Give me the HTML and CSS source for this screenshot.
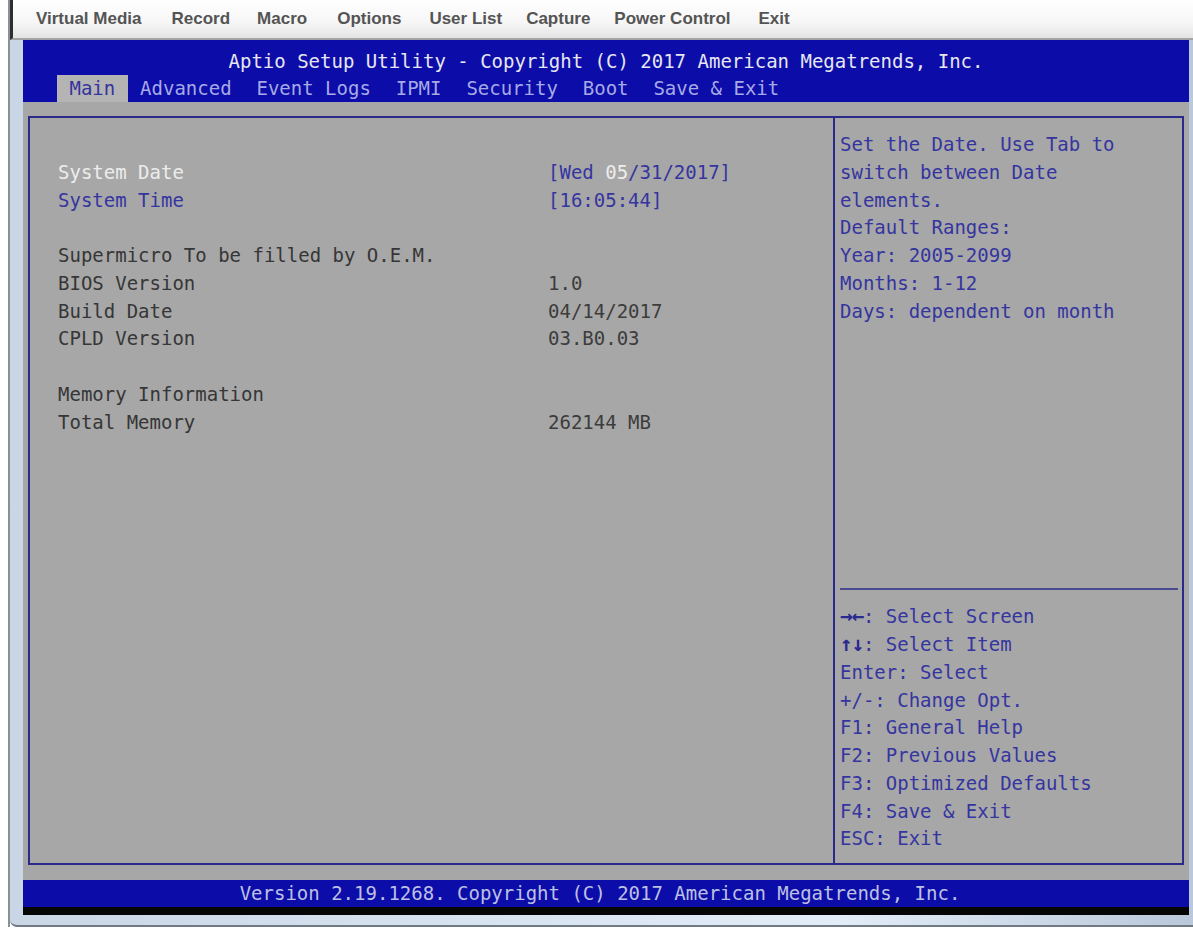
FILE: index.html
```html
<!DOCTYPE html>
<html lang="en">

<head>
    <meta charset="UTF-8">
    <meta name="viewport" content="width=device-width, initial-scale=1.0">
    <title>Aptio Setup Utility</title>
    <link rel="stylesheet" href="styles.css">
</head>

<body>
    <div class="window">
        <div class="menubar">
            <span>Virtual Media</span>
            <span class="gap-6">Record</span>
            <span class="gap-3">Macro</span>
            <span class="gap-6">Options</span>
            <span class="gap-4">User List</span>
            <span>Capture</span>
            <span>Power Control</span>
            <span class="gap-4">Exit</span>
        </div>

        <div class="frame">
            <div class="screen">
                <div class="bios-head">
                    <div class="title">Aptio Setup Utility - Copyright (C) 2017 American Megatrends, Inc.</div>
                    <div class="tabs">
                        <span class="tab active">Main</span>
                        <span class="tab">Advanced</span>
                        <span class="tab">Event Logs</span>
                        <span class="tab">IPMI</span>
                        <span class="tab">Security</span>
                        <span class="tab">Boot</span>
                        <span class="tab">Save &amp; Exit</span>
                    </div>
                </div>

                <div class="bios-body">
                    <div class="box">
                        <div class="main-pane">
                            <div class="row"></div>
                            <div class="row">
                                <span class="label selected">System Date</span>
                                <span class="value blue">[Wed <span class="hl">05</span>/31/2017]</span>
                            </div>
                            <div class="row">
                                <span class="label blue">System Time</span>
                                <span class="value blue">[16:05:44]</span>
                            </div>
                            <div class="row"></div>
                            <div class="row">
                                <span class="label">Supermicro To be filled by O.E.M.</span>
                            </div>
                            <div class="row">
                                <span class="label">BIOS Version</span>
                                <span class="value">1.0</span>
                            </div>
                            <div class="row">
                                <span class="label">Build Date</span>
                                <span class="value">04/14/2017</span>
                            </div>
                            <div class="row">
                                <span class="label">CPLD Version</span>
                                <span class="value">03.B0.03</span>
                            </div>
                            <div class="row"></div>
                            <div class="row">
                                <span class="label">Memory Information</span>
                            </div>
                            <div class="row">
                                <span class="label">Total Memory</span>
                                <span class="value">262144 MB</span>
                            </div>
                        </div>

                        <div class="help-pane">
                            <p class="help">Set the Date. Use Tab to switch between Date elements.<br>Default Ranges:<br>Year: 2005-2099<br>Months: 1-12<br>Days: dependent on month</p>
                            <div class="keys">
                                <div><span class="arrows">→←</span>: Select Screen</div>
                                <div><span class="arrows">↑↓</span>: Select Item</div>
                                <div>Enter: Select</div>
                                <div>+/-: Change Opt.</div>
                                <div>F1: General Help</div>
                                <div>F2: Previous Values</div>
                                <div>F3: Optimized Defaults</div>
                                <div>F4: Save &amp; Exit</div>
                                <div>ESC: Exit</div>
                            </div>
                        </div>
                    </div>
                </div>

                <div class="bios-foot">Version 2.19.1268. Copyright (C) 2017 American Megatrends, Inc.</div>
                <div class="scanline"></div>
            </div>
        </div>
    </div>
</body>

</html>
```

FILE: styles.css
```css
body {
    margin: 0;
    background-color: #ffffff;
}

.window {
    margin-left: 8px;
    border-left: 2px solid #8a9098;
}

.menubar {
    height: 38px;
    display: flex;
    align-items: center;
    gap: 24px;
    padding-left: 23px;
    border-left: 3px solid #2e2e2e;
    border-bottom: 2px solid #a4a4a4;
    background: linear-gradient(#ffffff, #f6f6f6 60%, #e4e4e4);
    font-family: "Liberation Sans", Arial, sans-serif;
    font-size: 17px;
    font-weight: bold;
    color: #545454;
}

.menubar .gap-3 {
    margin-left: 3px;
}

.menubar .gap-4 {
    margin-left: 4px;
}

.menubar .gap-6 {
    margin-left: 6px;
}

.frame {
    padding: 0 4px 10px 13px;
    background: linear-gradient(90deg, #c9d6e6, #e3edf8 70%, #b9c8da);
    border-bottom: 2px solid #707a84;
    border-bottom-left-radius: 7px;
}

.screen {
    width: 1166px;
    font-family: "DejaVu Sans Mono", monospace;
    font-size: 19px;
}

.bios-head {
    height: 62px;
    box-sizing: border-box;
    padding-top: 7px;
    background-color: #0c0ca8;
}

.title {
    line-height: 28px;
    text-align: center;
    white-space: pre;
    color: #e6e6f0;
}

.tabs {
    display: flex;
    padding-left: 34px;
    line-height: 27px;
    color: #a6aae6;
}

.tab {
    padding: 0 calc(1ch + 1px);
    white-space: pre;
}

.tab.active {
    background-color: #b4b4b4;
    color: #34349c;
}

.bios-body {
    height: 778px;
    box-sizing: border-box;
    padding: 14px 5px 15px 5px;
    background-color: #a7a7a7;
}

.box {
    height: 100%;
    box-sizing: border-box;
    display: flex;
    border: 2px solid #2a2a88;
}

.main-pane {
    flex-shrink: 0;
    width: 805px;
    padding: 13px 0 0 28px;
    box-sizing: border-box;
    border-right: 2px solid #2a2a88;
}

.row {
    display: flex;
    height: 27.75px;
    line-height: 27.75px;
    color: #363636;
}

.label {
    width: 490px;
    flex-shrink: 0;
    white-space: pre;
}

.value {
    white-space: pre;
    color: #3c3c3c;
}

.blue {
    color: #3535a0;
}

.selected {
    color: #ededed;
}

.hl {
    color: #ededed;
}

.help-pane {
    flex: 1;
    min-width: 0;
    display: flex;
    flex-direction: column;
    justify-content: space-between;
    padding: 13px 4px 10px 5px;
    color: #3535a0;
}

.help {
    margin: 0;
    width: 26ch;
    line-height: 27.75px;
}

.keys {
    border-top: 2px solid #4a4a8e;
    padding-top: 13px;
    line-height: 27.75px;
}

.keys div {
    white-space: pre;
}

.arrows {
    display: inline-block;
    width: 22.9px;
    font-size: 21px;
    line-height: 1;
    letter-spacing: -1px;
    font-weight: bold;
    color: #2a2a90;
}

.bios-foot {
    height: 27px;
    line-height: 27px;
    padding-right: 12px;
    text-align: center;
    white-space: pre;
    background-color: #0c0ca8;
    color: #bcc0e4;
}

.scanline {
    height: 8px;
    background-color: #060606;
}
```
